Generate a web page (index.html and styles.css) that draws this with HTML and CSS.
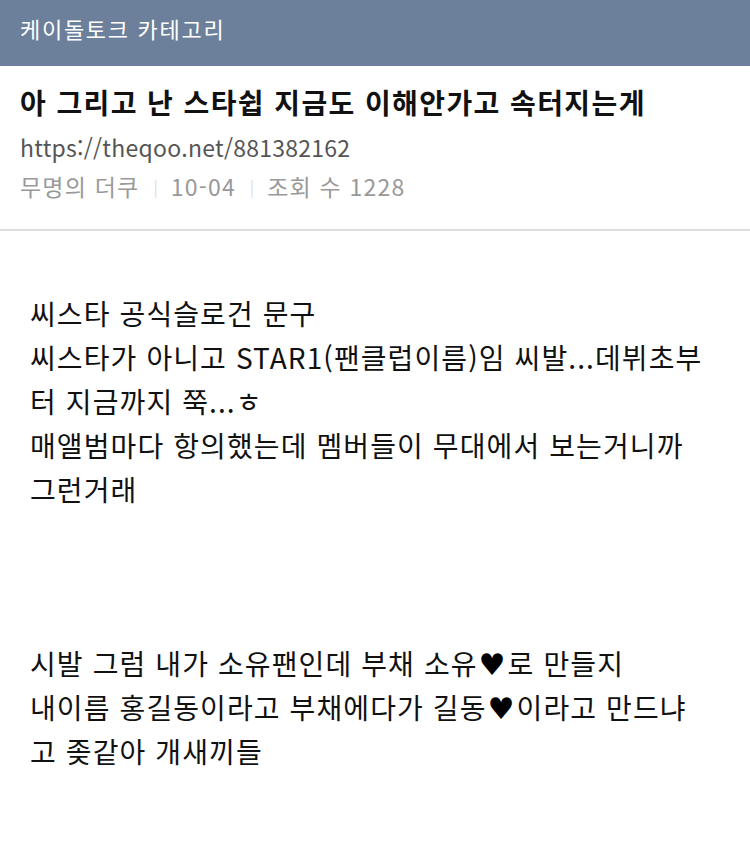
FILE: index.html
```html
<!DOCTYPE html>
<html lang="ko">
<head>
<meta charset="utf-8">
<link rel="stylesheet" href="styles.css">
</head>
<body>
<header class="topbar"><span class="topbar-title">케이돌토크 카테고리</span></header>
<section class="post-head">
  <h1 class="post-title">아 그리고 난 스타쉽 지금도 이해안가고 속터지는게</h1>
  <div class="post-url">https://theqoo.net/881382162</div>
  <div class="post-meta"><span>무명의 더쿠</span><span class="sep">|</span><span>10-04</span><span class="sep">|</span><span>조회 수 1228</span></div>
</section>
<article class="post-body">
  <p class="para">
    <span class="line">씨스타 공식슬로건 문구</span>
    <span class="line">씨스타가 아니고 STAR1(팬클럽이름)임 씨발...데뷔초부</span>
    <span class="line">터 지금까지 쭉...ㅎ</span>
    <span class="line">매앨범마다 항의했는데 멤버들이 무대에서 보는거니까</span>
    <span class="line">그런거래</span>
  </p>
  <p class="para gap">
    <span class="line">시발 그럼 내가 소유팬인데 부채 소유<span class="heart">♥</span>로 만들지</span>
    <span class="line">내이름 홍길동이라고 부채에다가 길동<span class="heart">♥</span>이라고 만드냐</span>
    <span class="line">고 좆같아 개새끼들</span>
  </p>
</article>
</body>
</html>
```
FILE: styles.css
```css
html, body {
  margin: 0;
  padding: 0;
  background: #ffffff;
}
body {
  width: 750px;
  font-family: "Noto Sans CJK KR", "Noto Sans", sans-serif;
  color: #111;
}
.topbar {
  height: 66px;
  background: #6d809b;
  display: flex;
  align-items: center;
  padding: 0 20px;
  box-sizing: border-box;
}
.topbar-title {
  color: #ffffff;
  font-size: 22px;
  letter-spacing: 1.7px;
  margin-top: -11px;
}
.post-head {
  padding: 14px 20px 23px;
  border-bottom: 2px solid #dedede;
}
.post-title {
  margin: 0;
  font-size: 28px;
  font-weight: 700;
  line-height: 44px;
  color: #111;
  letter-spacing: 1.4px;
}
.post-url {
  font-size: 23px;
  line-height: 38px;
  color: #555;
  margin-top: 4px;
  letter-spacing: 0.25px;
}
.post-meta {
  font-size: 23px;
  line-height: 40px;
  color: #999;
  display: flex;
  align-items: center;
  letter-spacing: 1.2px;
}
.post-meta .sep {
  color: #dcdcdc;
  font-size: 16px;
  margin: 0 13px 0 14px;
  letter-spacing: 0;
}
.post-body {
  padding: 60px 20px 40px 30px;
}
.para {
  margin: 0;
  display: flex;
  flex-direction: column;
  font-size: 28px;
  line-height: 44px;
  color: #111;
  letter-spacing: 1.1px;
}
.line {
  display: block;
  white-space: nowrap;
}
.para.gap {
  margin-top: 130px;
}
.heart {
  font-family: "DejaVu Sans", sans-serif;
  font-size: 30px;
  line-height: 1;
  color: #000;
  margin: 0 1px 0 1px;
}
```
